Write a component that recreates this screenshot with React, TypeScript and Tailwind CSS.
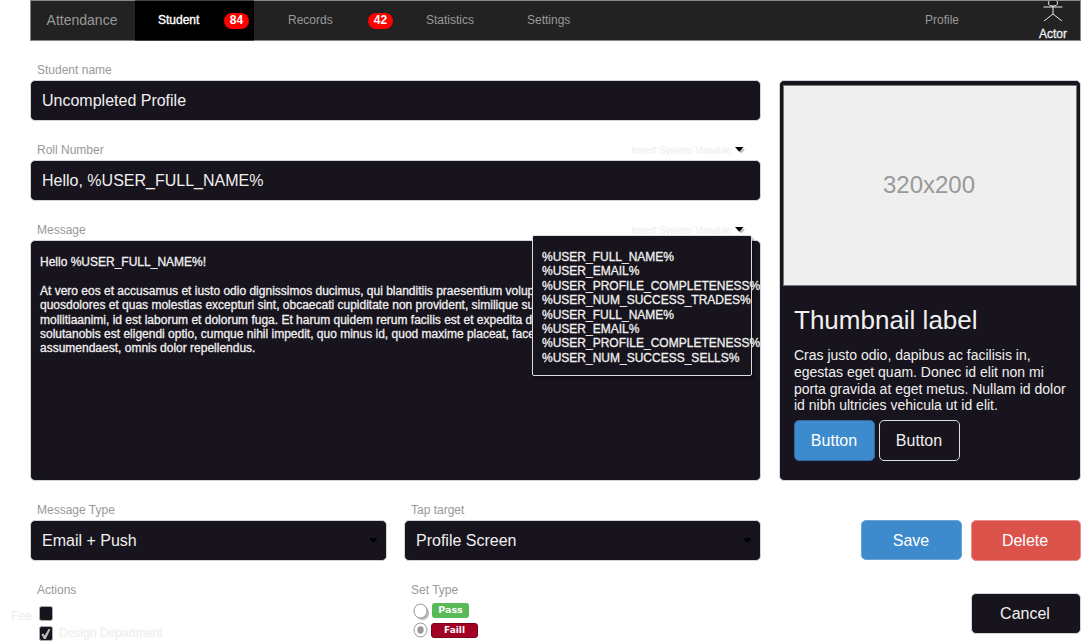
import type { ReactNode } from "react";

const box = "border border-[#d4d4d8] bg-[#18141d] rounded-[5px] text-[#f0f0f0]";

const variables = [
  "%USER_FULL_NAME%",
  "%USER_EMAIL%",
  "%USER_PROFILE_COMPLETENESS%",
  "%USER_NUM_SUCCESS_TRADES%",
  "%USER_FULL_NAME%",
  "%USER_EMAIL%",
  "%USER_PROFILE_COMPLETENESS%",
  "%USER_NUM_SUCCESS_SELLS%",
];

function Badge({ children }: { children: ReactNode }) {
  return (
    <span className="flex h-4 w-[25px] items-center justify-center rounded-full bg-[#ff0000] pb-px text-xs font-bold text-white">
      {children}
    </span>
  );
}

function Caret({ shadow = "#bbbbbb" }: { shadow?: string }) {
  return (
    <svg width="12" height="9" viewBox="0 0 12 9">
      <path d="M2 3h8L6.5 7.5z" fill={shadow} />
      <path d="M0 1h8.5L4.3 5.8z" fill="#000" />
    </svg>
  );
}

function Label({ children, variable = false }: { children: ReactNode; variable?: boolean }) {
  return (
    <div className="flex h-5 items-center justify-between pl-[7px] pr-[14px] text-xs text-[#999999]">
      <span>{children}</span>
      {variable && (
        <span className="flex items-center gap-1 pt-0.5 text-[10px] text-[#f0f0f0]">
          <span className="w-[101px] whitespace-nowrap text-right [-webkit-text-stroke:0.2px_currentColor]">
            Insert System Variable
          </span>
          <Caret />
        </span>
      )}
    </div>
  );
}

function Field({ children }: { children: ReactNode }) {
  return <div className={`flex h-[41px] items-center px-[11px] text-base ${box}`}>{children}</div>;
}

function Select({ children }: { children: ReactNode }) {
  return (
    <div className={`flex h-[41px] items-center justify-between pl-[11px] pr-[5px] text-base ${box}`}>
      <span>{children}</span>
      <span className="pt-px">
        <Caret shadow="#131017" />
      </span>
    </div>
  );
}

function Header() {
  return (
    <header className="flex h-[41px] w-[1051px] items-center border border-[#888888] bg-[#222222] text-xs text-[#999999]">
      <div className="w-[104px] pb-px pr-[2px] text-center text-sm">Attendance</div>
      <div className="-my-px flex h-[41px] w-[119px] items-center border-y border-y-[#444444] bg-black pr-[5px]">
        <span className="flex-1 pb-[2px] pl-[23px] text-white [-webkit-text-stroke:0.35px_currentColor]">Student</span>
        <Badge>84</Badge>
      </div>
      <span className="w-[114px] pb-[2px] pl-[34px]">Records</span>
      <Badge>42</Badge>
      <span className="w-[134px] pb-[2px] pl-[33px]">Statistics</span>
      <span className="flex-1 pb-[2px]">Settings</span>
      <span className="w-[101px] pb-[2px]">Profile</span>
      <div className="flex h-full w-[54px] flex-col items-center text-[#f0f0f0]">
        <svg width="22" height="25" viewBox="0 0 22 25" fill="none" stroke="#e8e8e8" className="shrink-0">
          <ellipse cx="11" cy="2" rx="4.5" ry="3" fill="#18141d" />
          <path d="M11 5V13M1.5 6h19M11 13l-9 7M11 13l9 7" />
        </svg>
        <span className="leading-4 [-webkit-text-stroke:0.3px_currentColor]">Actor</span>
      </div>
    </header>
  );
}

function VariableMenu() {
  return (
    <div className="absolute left-[502px] top-[34px] h-[141px] w-[220px] rounded-[2px] border border-[#dddddd] bg-[#18141d] pl-[9px] pt-[14px] text-xs leading-[14.4px] text-[#f0f0f0] shadow-[2px_3px_2px_rgba(0,0,0,0.3)] [-webkit-text-stroke:0.3px_currentColor]">
      {variables.map((name, i) => (
        <div key={i} className="whitespace-nowrap">{name}</div>
      ))}
    </div>
  );
}

function Thumbnail() {
  return (
    <aside className={`mt-5 flex h-[401px] w-[302px] flex-col p-[3px] ${box}`}>
      <div className="mt-px flex h-[201px] w-[294px] items-center justify-center border border-[#777777] bg-[#efefef] pb-[2px] pr-[2px] text-2xl text-[#999999]">
        320x200
      </div>
      <div className="pl-[11px] pt-[18px]">
        <h2 className="text-[26px] leading-8">Thumbnail label</h2>
        <p className="mt-[11px] whitespace-nowrap text-sm leading-[16.8px]">
          Cras justo odio, dapibus ac facilisis in,<br />
          egestas eget quam. Donec id elit non mi<br />
          porta gravida at eget metus. Nullam id dolor<br />
          id nibh ultricies vehicula ut id elit.
        </p>
        <div className="mt-[6px] flex gap-1">
          <button className="h-[41px] w-[81px] rounded-[5px] border border-[#3568a0] bg-[#3d8bcd] pr-px text-base text-white">Button</button>
          <button className="h-[41px] w-[81px] rounded-[5px] border border-[#dddddd] pr-px text-base">Button</button>
        </div>
      </div>
    </aside>
  );
}

function Checkbox({ checked = false }: { checked?: boolean }) {
  return (
    <svg width="14" height="15" viewBox="0 0 14 15" className="shrink-0">
      <rect x=".5" y=".5" width="13" height="14" rx="2" fill="#18141d" stroke="#aaa" />
      {checked && <path d="M2.3 8.5l2-1 1.4 2.1L9.5 3l2 .3L6.8 13H5z" fill="#bbb" />}
    </svg>
  );
}

function Radio({ checked = false }: { checked?: boolean }) {
  return (
    <svg width="18" height="18" viewBox="0 0 18 18" className="shrink-0">
      {!checked && <ellipse cx="9.5" cy="10" rx="6.5" ry="7" fill="#bbb" />}
      <ellipse cx="7.5" cy="8" rx="6.5" ry="7" fill="#fff" stroke="#999" />
      {checked && <ellipse cx="7.5" cy="8" rx="3.2" ry="3.7" fill="#999" />}
    </svg>
  );
}

export default function App() {
  return (
    <div className="h-[642px] w-[1081px] overflow-hidden bg-white font-['Liberation_Sans',Arial,sans-serif]">
      <div className="pl-[30px]">
        <Header />
      </div>
      <div className="flex pl-[30px] pt-[19px]">
        <main className="mr-[18px] w-[731px]">
          <Label>Student name</Label>
          <Field>Uncompleted Profile</Field>
          <div className="pt-[19px]">
            <Label variable>Roll Number</Label>
            <Field>Hello, %USER_FULL_NAME%</Field>
          </div>
          <div className="relative pt-[19px]">
            <Label variable>Message</Label>
            <div className={`h-[241px] overflow-hidden whitespace-nowrap pl-[9px] pt-[14px] text-xs leading-[14.4px] [-webkit-text-stroke:0.3px_currentColor] ${box}`}>
              <p>Hello %USER_FULL_NAME%!</p>
              <p className="pt-[14.4px]">
                At vero eos et accusamus et iusto odio dignissimos ducimus, qui blanditiis praesentium volup<br />
                quosdolores et quas molestias excepturi sint, obcaecati cupiditate non provident, similique su<br />
                mollitiaanimi, id est laborum et dolorum fuga. Et harum quidem rerum facilis est et expedita d<br />
                solutanobis est eligendi optio, cumque nihil impedit, quo minus id, quod maxime placeat, face<br />
                assumendaest, omnis dolor repellendus.
              </p>
            </div>
            <VariableMenu />
          </div>
        </main>
        <Thumbnail />
      </div>
      <div className="flex pt-[19px]">
        <section className="w-[387px]">
          <div className="pl-[30px]">
            <Label>Message Type</Label>
            <Select>Email + Push</Select>
            <div className="pt-[19px]"><Label>Actions</Label></div>
          </div>
          <div className="flex flex-col gap-[5px] pt-1.5 text-xs text-[#f0f0f0] [-webkit-text-stroke:0.3px_currentColor]">
            <div className="flex h-[15px] items-center pl-[11px]">
              <span className="w-7 pt-1">Fee</span>
              <Checkbox />
            </div>
            <div className="flex h-[15px] items-center gap-[6px] pl-[39px]">
              <Checkbox checked />
              <span className="-mt-px">Design Department</span>
            </div>
          </div>
        </section>
        <section className="ml-[17px] w-[357px]">
          <Label>Tap target</Label>
          <Select>Profile Screen</Select>
          <div className="pt-[19px]"><Label>Set Type</Label></div>
          <div className="flex flex-col gap-px pl-[9px] pt-[3px] font-['DejaVu_Sans',Verdana,sans-serif] text-[9.5px] font-bold text-white">
            <div className="flex items-start gap-px">
              <Radio />
              <span className="flex h-[15px] w-[37px] items-center justify-center rounded-[3px] bg-[#58b957]">Pass</span>
            </div>
            <div className="flex items-start gap-px">
              <Radio checked />
              <span className="-ml-px mt-px flex h-[15px] w-[47px] items-center justify-center rounded-[3px] border border-[#7a001c] bg-[#a20025] text-[9px]">Faill</span>
            </div>
          </div>
        </section>
        <div className="grid grid-cols-[101px_110px] content-start gap-x-[9px] gap-y-8 pl-[100px] pt-5 text-base text-white">
          <button className="h-10 rounded-[5px] border border-[#6aa3d8] bg-[#3d8bcd] pr-px pt-px">Save</button>
          <button className="h-[41px] rounded-[5px] border border-[#e88e8b] bg-[#db524b] pr-[2px]">Delete</button>
          <button className={`col-start-2 h-[41px] pr-[2px] ${box}`}>Cancel</button>
        </div>
      </div>
    </div>
  );
}
